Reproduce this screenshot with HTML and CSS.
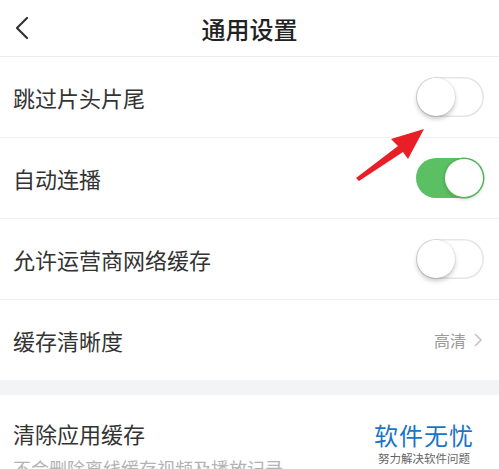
FILE: index.html
```html
<!DOCTYPE html>
<html lang="zh-CN">
<head>
    <meta charset="UTF-8">
    <meta name="viewport" content="width=device-width, initial-scale=1.0">
    <title>通用设置</title>
    <link rel="stylesheet" href="styles.css">
</head>
<body>
    <header class="topbar">
        <a class="back" href="#">
            <svg width="14" height="24" viewBox="0 0 14 24">
                <path d="M12 2 L2 12 L12 22" fill="none" stroke="#333" stroke-width="2.2" stroke-linecap="round" stroke-linejoin="round"/>
            </svg>
        </a>
        <h1>通用设置</h1>
        <span></span>
    </header>

    <div class="list">
        <div class="row">
            <span class="label">跳过片头片尾</span>
            <div class="switch"><div class="knob"></div></div>
        </div>
        <div class="row">
            <span class="label">自动连播</span>
            <div class="switch on"><div class="knob"></div></div>
        </div>
        <div class="row">
            <span class="label">允许运营商网络缓存</span>
            <div class="switch"><div class="knob"></div></div>
        </div>
        <div class="row last">
            <span class="label">缓存清晰度</span>
            <span class="value">高清
                <svg width="10" height="16" viewBox="0 0 10 16">
                    <path d="M2 2 L8 8 L2 14" fill="none" stroke="#c4c4c4" stroke-width="1.6"/>
                </svg>
            </span>
        </div>
    </div>

    <div class="gap"></div>

    <div class="list">
        <div class="row tall">
            <span class="label">清除应用缓存</span>
            <span class="sub">不会删除离线缓存视频及播放记录</span>
        </div>
    </div>

    <!-- 안내 화살표 -->
    <svg class="arrow" width="499" height="469" viewBox="0 0 499 469">
        <polygon points="424,129 391,139 398,146 356,178 359,181 403,152 408,159" fill="#e81f27"/>
    </svg>

    <div class="watermark">
        <div class="wm-title">软件无忧</div>
        <div class="wm-sub">努力解决软件问题</div>
    </div>
</body>
</html>
```

FILE: styles.css
```css
/* 기본 스타일 */
body {
    font-family: "Noto Sans CJK SC", "Noto Sans", sans-serif;
    margin: 0;
    padding: 0;
    background-color: #fff;
    color: #333;
    overflow: hidden;
}
.topbar {
    display: grid;
    grid-template-columns: 56px 1fr 56px;
    align-items: center;
    height: 56px;
    border-bottom: 1px solid #ededed;
}
.back {
    display: flex;
    padding-left: 15px;
}
.topbar h1 {
    margin: 0;
    text-align: center;
    font-size: 24px;
    font-weight: 500;
    color: #222;
}
.row {
    display: flex;
    justify-content: space-between;
    align-items: center;
    height: 80px;
    padding: 0 15px 0 13px;
    border-bottom: 1px solid #f0f0f0;
}
.row.last {
    border-bottom: none;
}
.row.tall {
    flex-direction: column;
    align-items: flex-start;
    justify-content: flex-start;
    height: auto;
    padding-top: 22px;
    border-bottom: none;
}
.label {
    font-size: 22px;
    color: #333;
}
.sub {
    margin-top: 6px;
    font-size: 18px;
    color: #b3b3b3;
}
.value {
    display: flex;
    align-items: center;
    gap: 7px;
    font-size: 16px;
    color: #9a9a9a;
    padding-right: 1px;
}
/* 스위치 */
.switch {
    position: relative;
    width: 68px;
    height: 40px;
    border-radius: 20px;
    background-color: #fff;
    box-shadow: inset 0 0 0 1.5px #e5e5e5;
}
.switch .knob {
    position: absolute;
    top: 1px;
    left: 1px;
    width: 38px;
    height: 38px;
    border-radius: 50%;
    background-color: #fff;
    box-shadow: 0 3px 5px rgba(0, 0, 0, 0.22), 0 0 0 1px rgba(0, 0, 0, 0.05);
}
.switch.on {
    background-color: #5bbf63;
    box-shadow: none;
}
.switch.on .knob {
    left: auto;
    right: 1px;
    box-shadow: 0 0 0 1.5px #53b35b, 0 2px 4px rgba(0, 0, 0, 0.2);
}
.gap {
    height: 15px;
    background-color: #f3f4f6;
}
.arrow {
    position: absolute;
    top: 0;
    left: 0;
    pointer-events: none;
}
.watermark {
    position: absolute;
    left: 374px;
    top: 420px;
    text-align: center;
}
.wm-title {
    font-size: 24px;
    letter-spacing: 1px;
    line-height: 30px;
    color: #1b74c5;
}
.wm-sub {
    font-size: 11.5px;
    line-height: 16px;
    color: #666;
}
```
